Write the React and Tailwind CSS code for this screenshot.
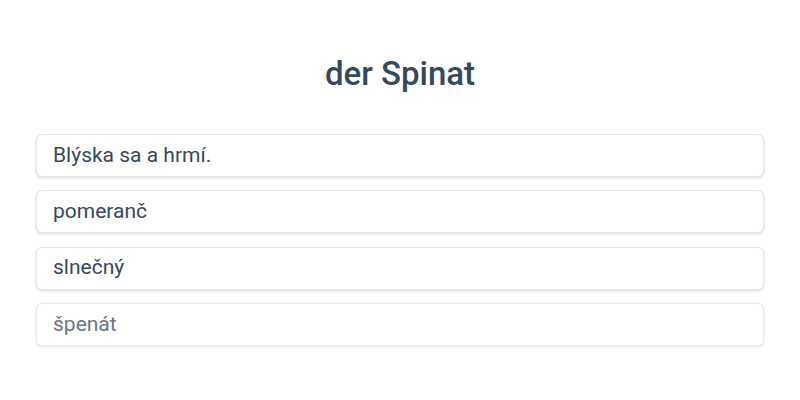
const options = ['Blýska sa a hrmí.', 'pomeranč', 'slnečný', 'špenát'];

export default function App() {
  return (
    <div className="w-[800px] h-[400px] bg-white px-9 pt-[54px]" style={{ fontFamily: 'Roboto, sans-serif' }}>
      <h1 className="text-center text-[33px] leading-10 font-medium text-[#34495e]">der Spinat</h1>
      <div className="mt-[40px] flex flex-col gap-[13.33px]">
        {options.map((o, i) => (
          <div
            key={o}
            className={`h-[43px] flex items-center px-[16px] rounded-md bg-white border border-[#e6e6e6] shadow-[0_1px_3px_rgba(0,0,0,0.15)] text-[21px] text-[#34495e] ${i === 3 ? 'opacity-75' : ''}`}
          >
            {o}
          </div>
        ))}
      </div>
    </div>
  );
}
